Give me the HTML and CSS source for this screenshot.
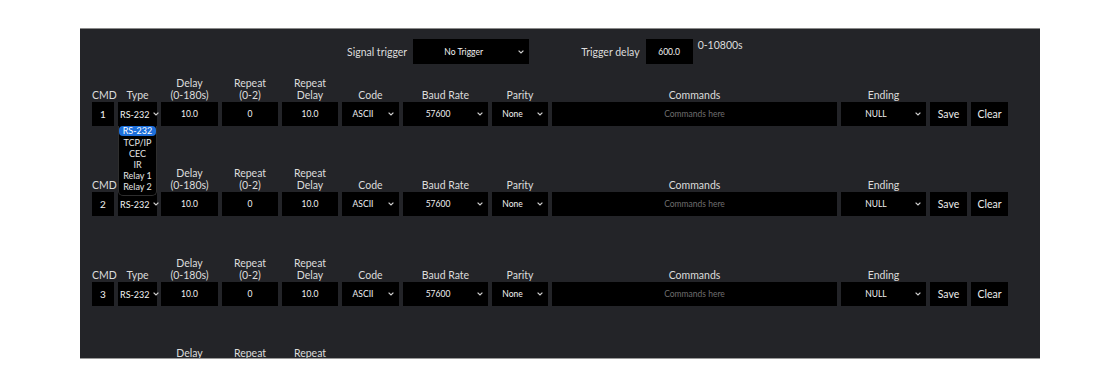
FILE: index.html
```html
<!DOCTYPE html>
<html lang="en">
<head>
<meta charset="utf-8">
<title>Commands</title>
<link rel="stylesheet" href="styles.css">
</head>
<body>
<div class="panel">
  <div class="topbar">
    <span class="top-label">Signal trigger</span>
    <div class="box select trigger-select"><span class="sel-text">No Trigger</span><svg class="chev" width="6" height="4" viewBox="0 0 6 4"><polyline points="0.6,0.6 3,3 5.4,0.6"/></svg></div>
    <span class="top-label delay-label">Trigger delay</span>
    <div class="box trigger-input">600.0</div>
    <span class="range-note">0-10800s</span>
  </div>

  <div class="cmd-block">
    <div class="cmd-grid head">
      <span>CMD</span><span>Type</span><span>Delay<br>(0-180s)</span><span>Repeat<br>(0-2)</span><span>Repeat<br>Delay</span><span>Code</span><span>Baud Rate</span><span>Parity</span><span>Commands</span><span>Ending</span><span></span><span></span>
    </div>
    <div class="cmd-grid fields">
      <div class="box num">1</div>
      <div class="box type-select has-menu"><span class="type-text">RS-232</span><svg class="tchev" width="6" height="4" viewBox="0 0 6 4"><polyline points="0.6,0.6 3,3 5.4,0.6"/></svg>
        <ul class="menu">
          <li class="active">RS-232</li><li>TCP/IP</li><li>CEC</li><li>IR</li><li>Relay 1</li><li>Relay 2</li>
        </ul>
      </div>
      <div class="box">10.0</div>
      <div class="box">0</div>
      <div class="box">10.0</div>
      <div class="box select"><span class="sel-text">ASCII</span><svg class="chev" width="6" height="4" viewBox="0 0 6 4"><polyline points="0.6,0.6 3,3 5.4,0.6"/></svg></div>
      <div class="box select"><span class="sel-text">57600</span><svg class="chev" width="6" height="4" viewBox="0 0 6 4"><polyline points="0.6,0.6 3,3 5.4,0.6"/></svg></div>
      <div class="box select"><span class="sel-text">None</span><svg class="chev" width="6" height="4" viewBox="0 0 6 4"><polyline points="0.6,0.6 3,3 5.4,0.6"/></svg></div>
      <div class="box placeholder">Commands here</div>
      <div class="box select"><span class="sel-text">NULL</span><svg class="chev" width="6" height="4" viewBox="0 0 6 4"><polyline points="0.6,0.6 3,3 5.4,0.6"/></svg></div>
      <div class="box btn">Save</div>
      <div class="box btn">Clear</div>
    </div>
  </div>

  <div class="cmd-block">
    <div class="cmd-grid head">
      <span>CMD</span><span class="under-menu">Type</span><span>Delay<br>(0-180s)</span><span>Repeat<br>(0-2)</span><span>Repeat<br>Delay</span><span>Code</span><span>Baud Rate</span><span>Parity</span><span>Commands</span><span>Ending</span><span></span><span></span>
    </div>
    <div class="cmd-grid fields">
      <div class="box num">2</div>
      <div class="box type-select"><span class="type-text">RS-232</span><svg class="tchev" width="6" height="4" viewBox="0 0 6 4"><polyline points="0.6,0.6 3,3 5.4,0.6"/></svg></div>
      <div class="box">10.0</div>
      <div class="box">0</div>
      <div class="box">10.0</div>
      <div class="box select"><span class="sel-text">ASCII</span><svg class="chev" width="6" height="4" viewBox="0 0 6 4"><polyline points="0.6,0.6 3,3 5.4,0.6"/></svg></div>
      <div class="box select"><span class="sel-text">57600</span><svg class="chev" width="6" height="4" viewBox="0 0 6 4"><polyline points="0.6,0.6 3,3 5.4,0.6"/></svg></div>
      <div class="box select"><span class="sel-text">None</span><svg class="chev" width="6" height="4" viewBox="0 0 6 4"><polyline points="0.6,0.6 3,3 5.4,0.6"/></svg></div>
      <div class="box placeholder">Commands here</div>
      <div class="box select"><span class="sel-text">NULL</span><svg class="chev" width="6" height="4" viewBox="0 0 6 4"><polyline points="0.6,0.6 3,3 5.4,0.6"/></svg></div>
      <div class="box btn">Save</div>
      <div class="box btn">Clear</div>
    </div>
  </div>

  <div class="cmd-block">
    <div class="cmd-grid head">
      <span>CMD</span><span>Type</span><span>Delay<br>(0-180s)</span><span>Repeat<br>(0-2)</span><span>Repeat<br>Delay</span><span>Code</span><span>Baud Rate</span><span>Parity</span><span>Commands</span><span>Ending</span><span></span><span></span>
    </div>
    <div class="cmd-grid fields">
      <div class="box num">3</div>
      <div class="box type-select"><span class="type-text">RS-232</span><svg class="tchev" width="6" height="4" viewBox="0 0 6 4"><polyline points="0.6,0.6 3,3 5.4,0.6"/></svg></div>
      <div class="box">10.0</div>
      <div class="box">0</div>
      <div class="box">10.0</div>
      <div class="box select"><span class="sel-text">ASCII</span><svg class="chev" width="6" height="4" viewBox="0 0 6 4"><polyline points="0.6,0.6 3,3 5.4,0.6"/></svg></div>
      <div class="box select"><span class="sel-text">57600</span><svg class="chev" width="6" height="4" viewBox="0 0 6 4"><polyline points="0.6,0.6 3,3 5.4,0.6"/></svg></div>
      <div class="box select"><span class="sel-text">None</span><svg class="chev" width="6" height="4" viewBox="0 0 6 4"><polyline points="0.6,0.6 3,3 5.4,0.6"/></svg></div>
      <div class="box placeholder">Commands here</div>
      <div class="box select"><span class="sel-text">NULL</span><svg class="chev" width="6" height="4" viewBox="0 0 6 4"><polyline points="0.6,0.6 3,3 5.4,0.6"/></svg></div>
      <div class="box btn">Save</div>
      <div class="box btn">Clear</div>
    </div>
  </div>

  <div class="cmd-block">
    <div class="cmd-grid head">
      <span>CMD</span><span>Type</span><span>Delay<br>(0-180s)</span><span>Repeat<br>(0-2)</span><span>Repeat<br>Delay</span><span>Code</span><span>Baud Rate</span><span>Parity</span><span>Commands</span><span>Ending</span><span></span><span></span>
    </div>
  </div>
</div>
</body>
</html>
```

FILE: styles.css
```css
html, body {
  margin: 0;
  padding: 0;
  background: #ffffff;
}

body {
  font-family: Lato, "Noto Sans", sans-serif;
}

.panel {
  margin: 28px 0 0 80px;
  width: 960px;
  height: 331px;
  box-sizing: border-box;
  background: #232428;
  border-top: 1px solid #8a8a8a;
  border-bottom: 1px solid #9a9a9a;
  overflow: hidden;
  padding: 10px 0 0 0;
}

.topbar {
  display: flex;
  align-items: center;
  height: 25px;
  padding-left: 267px;
  margin-bottom: 13px;
}

.top-label {
  font-size: 10.5px;
  color: #dcdcdc;
  margin-right: 6px;
}

.delay-label {
  margin-left: 52px;
  margin-right: 6px;
}

.range-note {
  font-size: 10.5px;
  color: #dcdcdc;
  margin-left: 5px;
  align-self: flex-start;
}

.box {
  background: #000000;
  color: #f2f2f2;
  font-size: 8.5px;
  height: 24px;
  display: flex;
  align-items: center;
  justify-content: center;
  box-sizing: border-box;
  white-space: nowrap;
}

.trigger-select {
  width: 116px;
  height: 25px;
}

.trigger-input {
  width: 47px;
  height: 25px;
}

.select {
  padding-right: 15px;
  position: relative;
}

.sel-text {
  flex: 1;
  text-align: center;
}

.chev {
  position: absolute;
  right: 5px;
  top: 50%;
  margin-top: -2px;
}

.chev polyline,
.tchev polyline {
  fill: none;
  stroke: #d0d0d0;
  stroke-width: 1.2;
}

.type-select {
  position: relative;
  justify-content: flex-start;
  padding-left: 2px;
  gap: 3px;
  font-size: 9px;
}

.tchev {
  flex: none;
}

.cmd-block {
  margin-bottom: 41px;
}

.cmd-grid {
  display: grid;
  grid-template-columns: 22px 39px 57px 56px 56px 57px 85px 56px 285px 85px 37px 37px;
  column-gap: 4px;
  padding-left: 12px;
}

.head {
  height: 24px;
  margin-bottom: 1px;
  align-items: end;
  text-align: center;
  font-size: 10.5px;
  line-height: 12px;
  color: #dcdcdc;
}

.under-menu {
  visibility: hidden;
}

.fields .num {
  font-size: 10px;
}

.placeholder {
  color: #6e6e6e;
}

.btn {
  font-size: 10.5px;
  color: #ececec;
}

.menu {
  position: absolute;
  left: 0;
  top: 24px;
  width: 39px;
  margin: 0;
  padding: 0 0 2px 0;
  list-style: none;
  background: #000000;
  border: 1px solid #2e2e2e;
  border-top: none;
  border-radius: 0 0 5px 5px;
  box-sizing: border-box;
  z-index: 5;
}

.menu li {
  font-size: 9px;
  line-height: 11.2px;
  text-align: center;
  color: #e4e4e4;
}

.menu li.active {
  background: #1d6fdb;
  color: #ffffff;
  border-radius: 4px;
  line-height: 10px;
  margin-bottom: 0.6px;
}
```
